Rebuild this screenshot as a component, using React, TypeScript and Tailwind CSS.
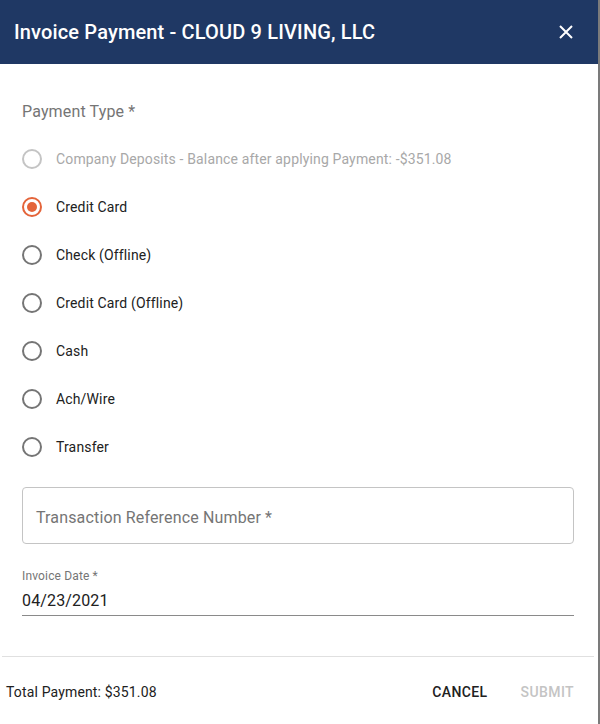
import React from "react";

const options = [
  { label: "Company Deposits - Balance after applying Payment: -$351.08", disabled: true },
  { label: "Credit Card", checked: true },
  { label: "Check (Offline)" },
  { label: "Credit Card (Offline)" },
  { label: "Cash" },
  { label: "Ach/Wire" },
  { label: "Transfer" },
];

function Radio({ checked, disabled }: { checked?: boolean; disabled?: boolean }) {
  const color = disabled ? "#c4c4c4" : checked ? "#e4643a" : "#757575";
  return (
    <svg width="20" height="20" viewBox="0 0 20 20" className="shrink-0">
      <circle cx="10" cy="10" r="9" fill="none" stroke={color} strokeWidth="2" />
      {checked && <circle cx="10" cy="10" r="5" fill={color} />}
    </svg>
  );
}

export default function App() {
  return (
    <div className="flex h-[724px] w-[600px] bg-[#7b7b7b]" style={{ fontFamily: "Roboto, 'Liberation Sans', sans-serif" }}>
      <div className="flex h-full w-[598px] flex-col bg-white">
        <div className="flex h-[64px] shrink-0 items-center justify-between bg-[#1f3864] pl-[14px] pr-[24px]">
          <h1 className="text-[20px] font-medium tracking-[0.15px] text-white">Invoice Payment - CLOUD 9 LIVING, LLC</h1>
          <svg width="16" height="16" viewBox="0 0 16 16">
            <path d="M2 2L14 14M14 2L2 14" stroke="white" strokeWidth="2" />
          </svg>
        </div>
        <div className="flex flex-1 flex-col px-[22px] pr-[24px]">
          <div className="mt-[38px] text-[16px] leading-[20px] tracking-[0.15px] text-[#757575]">Payment Type *</div>
          <div className="mt-[13px] flex flex-col">
            {options.map((o) => (
              <div key={o.label} className="flex h-[48px] items-center gap-[14px]">
                <Radio checked={o.checked} disabled={o.disabled} />
                <span className={`text-[14px] tracking-[0.15px] ${o.disabled ? "text-[#a8a8a8]" : "text-[#212121]"}`}>{o.label}</span>
              </div>
            ))}
          </div>
          <div className="mt-[16px] flex h-[57px] items-center rounded-[4px] border border-[#c4c4c4] px-[13px] pt-[4px]">
            <span className="text-[16px] tracking-[0.15px] text-[#757575]">Transaction Reference Number *</span>
          </div>
          <div className="mt-[25px] text-[12px] leading-[14px] tracking-[0.15px] text-[#757575]">Invoice Date *</div>
          <div className="mt-[8px] border-b border-[#8a8a8a] pb-[4px] text-[16px] leading-[20px] tracking-[0.15px] text-[#212121]">04/23/2021</div>
        </div>
        <div className="ml-[2px] mr-[4px] border-t border-[#e0e0e0]" />
        <div className="flex h-[67px] items-center justify-between pl-[6px] pr-[24px] pt-[4px]">
          <span className="text-[14px] tracking-[0.15px] text-[#212121]">Total Payment: $351.08</span>
          <div className="flex items-center gap-[33px]">
            <span className="text-[14px] font-medium tracking-[0.4px] text-[#212121]">CANCEL</span>
            <span className="text-[14px] font-medium tracking-[0.4px] text-[#c4c4c4]">SUBMIT</span>
          </div>
        </div>
      </div>
    </div>
  );
}
